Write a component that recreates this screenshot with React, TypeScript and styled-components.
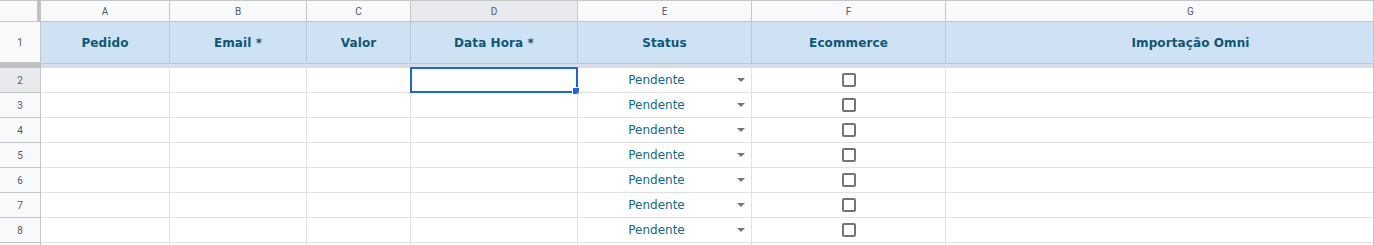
import React, { FC } from 'react';
import styled, { createGlobalStyle } from 'styled-components';

const GlobalStyle = createGlobalStyle`
  html, body {
    margin: 0;
    padding: 0;
    background: #ffffff;
  }
`;

const columns = [
  { letter: 'A', width: 129, title: 'Pedido' },
  { letter: 'B', width: 137, title: 'Email *' },
  { letter: 'C', width: 104, title: 'Valor' },
  { letter: 'D', width: 167, title: 'Data Hora *' },
  { letter: 'E', width: 174, title: 'Status' },
  { letter: 'F', width: 194, title: 'Ecommerce' },
  { letter: 'G', width: 490, title: 'Importação Omni' },
];

// row 9 is only partly in view, its number falls below the edge
const rows = [2, 3, 4, 5, 6, 7, 8, 9];

const Sheet = styled.div`
  display: grid;
  grid-template-columns: 41px ${columns.map((c) => `${c.width}px`).join(' ')};
  grid-template-rows: 22px 41px 5px repeat(${rows.length}, 25px);
  width: 1374px;
  height: 245px;
  box-sizing: border-box;
  border-right: 1px solid #c4c7c5;
  overflow: hidden;
  font-family: 'DejaVu Sans', Verdana, sans-serif;
`;

const Corner = styled.div`
  background: #f8f9fa;
  border-top: 1px solid #c4c7c5;
  border-right: 4px solid #c0c0c0;
  border-bottom: 1px solid #c4c7c5;
  box-sizing: border-box;
`;

const ColHead = styled.div<{ $active?: boolean }>`
  display: flex;
  align-items: center;
  justify-content: center;
  box-sizing: border-box;
  background: ${(p) => (p.$active ? '#e8eaed' : '#f8f9fa')};
  border-top: 1px solid #c4c7c5;
  border-right: 1px solid #c4c7c5;
  border-bottom: 1px solid #c4c7c5;
  color: #575a5e;
  font-family: Roboto, 'Liberation Sans', sans-serif;
  font-size: 10px;
`;

const RowHead = styled.div<{ $active?: boolean }>`
  display: flex;
  align-items: center;
  justify-content: center;
  box-sizing: border-box;
  background: ${(p) => (p.$active ? '#e8eaed' : '#f8f9fa')};
  border-right: 1px solid #c4c7c5;
  border-bottom: 1px solid #c4c7c5;
  color: #575a5e;
  font-family: Roboto, 'Liberation Sans', sans-serif;
  font-size: 10px;
`;

const TitleCell = styled.div`
  display: flex;
  align-items: center;
  justify-content: center;
  box-sizing: border-box;
  background: #cfe2f3;
  border-right: 1px solid #b7c9d6;
  color: #0b5878;
  font-weight: bold;
  font-size: 12px;
  letter-spacing: 0.1px;
`;

const FreezeBar = styled.div<{ $head?: boolean }>`
  background: ${(p) => (p.$head ? '#bfbfbf' : '#d9dde8')};
  border-top: ${(p) => (p.$head ? 'none' : '1px solid #b7c9d6')};
  box-sizing: border-box;
`;

const Cell = styled.div<{ $pad?: number }>`
  position: relative;
  display: flex;
  align-items: center;
  justify-content: center;
  box-sizing: border-box;
  border-right: 1px solid #e1e1e1;
  border-bottom: 1px solid #e1e1e1;
  padding-right: ${(p) => p.$pad ?? 0}px;
  color: #106b87;
  font-size: 12px;
`;

const Selection = styled.div`
  position: absolute;
  left: -1px;
  top: -1px;
  right: -1px;
  bottom: -1px;
  border: 2px solid #1a66e8;
  pointer-events: none;
`;

const Handle = styled.div`
  position: absolute;
  right: -4px;
  bottom: -4px;
  width: 6px;
  height: 6px;
  background: #1a66e8;
  border: 1px solid #ffffff;
`;

const Arrow = styled.div`
  position: absolute;
  right: 6px;
  top: 50%;
  margin-top: -2px;
  width: 0;
  height: 0;
  border-left: 4px solid transparent;
  border-right: 4px solid transparent;
  border-top: 4px solid #757575;
`;

const Checkbox = styled.div`
  width: 14px;
  height: 14px;
  box-sizing: border-box;
  border: 2px solid #747474;
  border-radius: 2px;
  background: #ffffff;
`;

const App: FC = () => {
  const last = rows[rows.length - 1];
  return (
    <>
      <GlobalStyle />
      <Sheet>
        <Corner />
        {columns.map((c) => (
          <ColHead key={c.letter} $active={c.letter === 'D'}>
            {c.letter}
          </ColHead>
        ))}

        <RowHead>1</RowHead>
        {columns.map((c) => (
          <TitleCell key={c.letter}>{c.title}</TitleCell>
        ))}

        <FreezeBar $head />
        {columns.map((c) => (
          <FreezeBar key={c.letter} />
        ))}

        {rows.map((r) => {
          const visible = r !== last;
          return (
            <React.Fragment key={r}>
              <RowHead $active={r === 2}>{visible && r}</RowHead>
              {columns.map((c) => {
                if (c.letter === 'E') {
                  return (
                    <Cell key={c.letter} $pad={16}>
                      {visible && 'Pendente'}
                      {visible && <Arrow />}
                    </Cell>
                  );
                }
                if (c.letter === 'F') {
                  return <Cell key={c.letter}>{visible && <Checkbox />}</Cell>;
                }
                return (
                  <Cell key={c.letter}>
                    {c.letter === 'D' && r === 2 && (
                      <Selection>
                        <Handle />
                      </Selection>
                    )}
                  </Cell>
                );
              })}
            </React.Fragment>
          );
        })}
      </Sheet>
    </>
  );
};

export default App;
